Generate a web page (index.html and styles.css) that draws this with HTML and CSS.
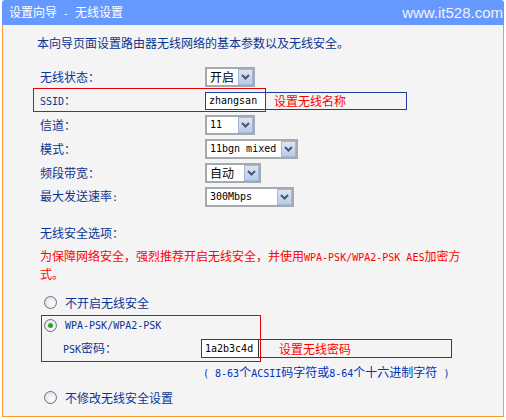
FILE: index.html
```html
<!DOCTYPE html>
<html lang="zh-CN">
<head>
  <meta charset="UTF-8" />
  <title>设置向导 - 无线设置</title>
  <link rel="stylesheet" href="styles.css">
</head>
<body>
  <div class="panel">
    <div class="title">
      <span>设置向导<span class="en"> - </span>无线设置</span>
      <span class="site">www.it528.com</span>
    </div>
    <div class="content">
      <p class="intro">本向导页面设置路由器无线网络的基本参数以及无线安全。</p>

      <div class="form">
        <div class="row">
          <label>无线状态：</label>
          <div class="sel sel-s"><span>开启</span><span class="arrow"><svg width="9" height="6" viewBox="0 0 9 6"><path d="M1 1l3.5 3.5L8 1" fill="none" stroke="#4a566b" stroke-width="2"/></svg></span></div>
        </div>
        <div class="row">
          <label><span class="en">SSID</span>：</label>
          <div class="mark-blue">
            <span class="txt en">zhangsan</span>
            <span class="tip">设置无线名称</span>
          </div>
          <span class="mark-red ssid-mark"></span>
        </div>
        <div class="row">
          <label>信道：</label>
          <div class="sel sel-s"><span class="en">11</span><span class="arrow"><svg width="9" height="6" viewBox="0 0 9 6"><path d="M1 1l3.5 3.5L8 1" fill="none" stroke="#4a566b" stroke-width="2"/></svg></span></div>
        </div>
        <div class="row">
          <label>模式：</label>
          <div class="sel sel-xl"><span class="en">11bgn mixed</span><span class="arrow"><svg width="9" height="6" viewBox="0 0 9 6"><path d="M1 1l3.5 3.5L8 1" fill="none" stroke="#4a566b" stroke-width="2"/></svg></span></div>
        </div>
        <div class="row">
          <label>频段带宽：</label>
          <div class="sel sel-m"><span>自动</span><span class="arrow"><svg width="9" height="6" viewBox="0 0 9 6"><path d="M1 1l3.5 3.5L8 1" fill="none" stroke="#4a566b" stroke-width="2"/></svg></span></div>
        </div>
        <div class="row">
          <label>最大发送速率<span class="en">:</span></label>
          <div class="sel sel-l"><span class="en">300Mbps</span><span class="arrow"><svg width="9" height="6" viewBox="0 0 9 6"><path d="M1 1l3.5 3.5L8 1" fill="none" stroke="#4a566b" stroke-width="2"/></svg></span></div>
        </div>
      </div>

      <p class="sec-title">无线安全选项：</p>
      <p class="warn">为保障网络安全，强烈推荐开启无线安全，并使用<span class="en">WPA-PSK/WPA2-PSK AES</span>加密方<br>式。</p>

      <div class="opts">
        <div class="opt"><span class="radio"></span>不开启无线安全</div>
        <div class="psk-group">
          <div class="opt"><span class="radio checked"></span><span class="en">WPA-PSK/WPA2-PSK</span></div>
          <div class="psk-row">
            <label><span class="en">PSK</span>密码：</label>
            <div class="mark-blue psk-box">
              <span class="txt en">1a2b3c4d</span>
              <span class="tip">设置无线密码</span>
            </div>
          </div>
          <span class="mark-red psk-mark"></span>
          <div class="hint"><span class="en">( 8-63</span>个<span class="en">ACSII</span>码字符或<span class="en">8-64</span>个十六进制字符<span class="en"> )</span></div>
        </div>
        <div class="opt last"><span class="radio"></span>不修改无线安全设置</div>
      </div>
    </div>
  </div>
</body>
</html>
```

FILE: styles.css
```css
body {
  margin: 0;
  background: #ffffff;
  font-family: "Noto Sans CJK SC", sans-serif;
  font-size: 12px;
  line-height: 16px;
  color: #0b3591;
}
p {
  margin: 0;
}
.en {
  font-family: "DejaVu Sans Mono", monospace;
  font-size: 10px;
}
.panel {
  margin-left: 2px;
  width: 502px;
}
.title {
  height: 25px;
  background: #6699ff;
  border-radius: 3px 3px 0 0;
  display: flex;
  align-items: center;
  justify-content: space-between;
  padding: 0 1px 0 7px;
  color: #ffffff;
}
.site {
  font-family: "Liberation Sans", sans-serif;
  font-size: 15px;
  color: #f0f3fa;
}
.content {
  height: 392px;
  box-sizing: border-box;
  background: #f4f4f4;
  border: 1px solid #ff9933;
  border-top: 0;
  padding: 10px 0 0 34px;
}
.form {
  margin: 14px 0 0 3px;
}
.row {
  position: relative;
  display: flex;
  align-items: center;
  height: 24px;
}
.row label {
  width: 165px;
}
.sel {
  display: flex;
  align-items: center;
  justify-content: space-between;
  height: 20px;
  box-sizing: border-box;
  border: 2px solid #a6a9ad;
  background: #ffffff;
  padding-left: 3px;
  color: #000;
}
.sel-s { width: 50px; }
.sel-m { width: 56px; }
.sel-l { width: 89px; }
.sel-xl { width: 93px; }
.arrow {
  display: flex;
  align-items: center;
  justify-content: center;
  width: 15px;
  height: 16px;
  box-sizing: border-box;
  border: 1px solid #a3b7d6;
  background: linear-gradient(#dbe6f6, #b9cce9);
}
.mark-blue {
  display: flex;
  align-items: center;
  width: 202px;
  height: 18px;
  box-sizing: border-box;
  border: 1px solid #1f3d9e;
}
.txt {
  width: 59px;
  height: 100%;
  background: #ffffff;
  color: #000;
  padding-left: 3px;
  box-sizing: border-box;
  display: flex;
  align-items: center;
}
.tip {
  color: #ff0000;
  margin-left: 9px;
}
.mark-red {
  position: absolute;
  border: 1px solid #e60000;
  box-sizing: border-box;
  pointer-events: none;
}
.ssid-mark {
  left: -7px;
  top: -1px;
  width: 233px;
  height: 24px;
}
.sec-title {
  margin: 16px 0 0 3px;
}
.warn {
  margin: 7px 0 0 3px;
  width: 425px;
  color: #ff0000;
}
.opts {
  margin-top: 9px;
}
.opt {
  display: flex;
  align-items: center;
  height: 23px;
  padding-left: 7px;
}
.opt.last {
  margin-top: 3px;
}
.radio {
  width: 13px;
  height: 13px;
  box-sizing: border-box;
  border-radius: 50%;
  border: 1px solid #5d7392;
  background: radial-gradient(circle at 60% 60%, #ffffff, #d6d9de);
  margin-right: 8px;
  display: flex;
  align-items: center;
  justify-content: center;
}
.radio.checked::after {
  content: "";
  width: 5px;
  height: 5px;
  border-radius: 50%;
  background: #2aa52a;
}
.psk-group {
  position: relative;
}
.psk-row {
  display: flex;
  align-items: center;
  height: 23px;
  padding-left: 26px;
}
.psk-row label {
  width: 138px;
}
.psk-box {
  width: 251px;
  height: 19px;
}
.psk-box .txt {
  width: 57px;
  border-right: 1px solid #333;
}
.psk-box .tip {
  margin-left: 20px;
}
.psk-mark {
  left: 4px;
  top: 1px;
  width: 220px;
  height: 47px;
}
.hint {
  height: 23px;
  line-height: 23px;
  padding-left: 166px;
  color: #0033bb;
}
```
